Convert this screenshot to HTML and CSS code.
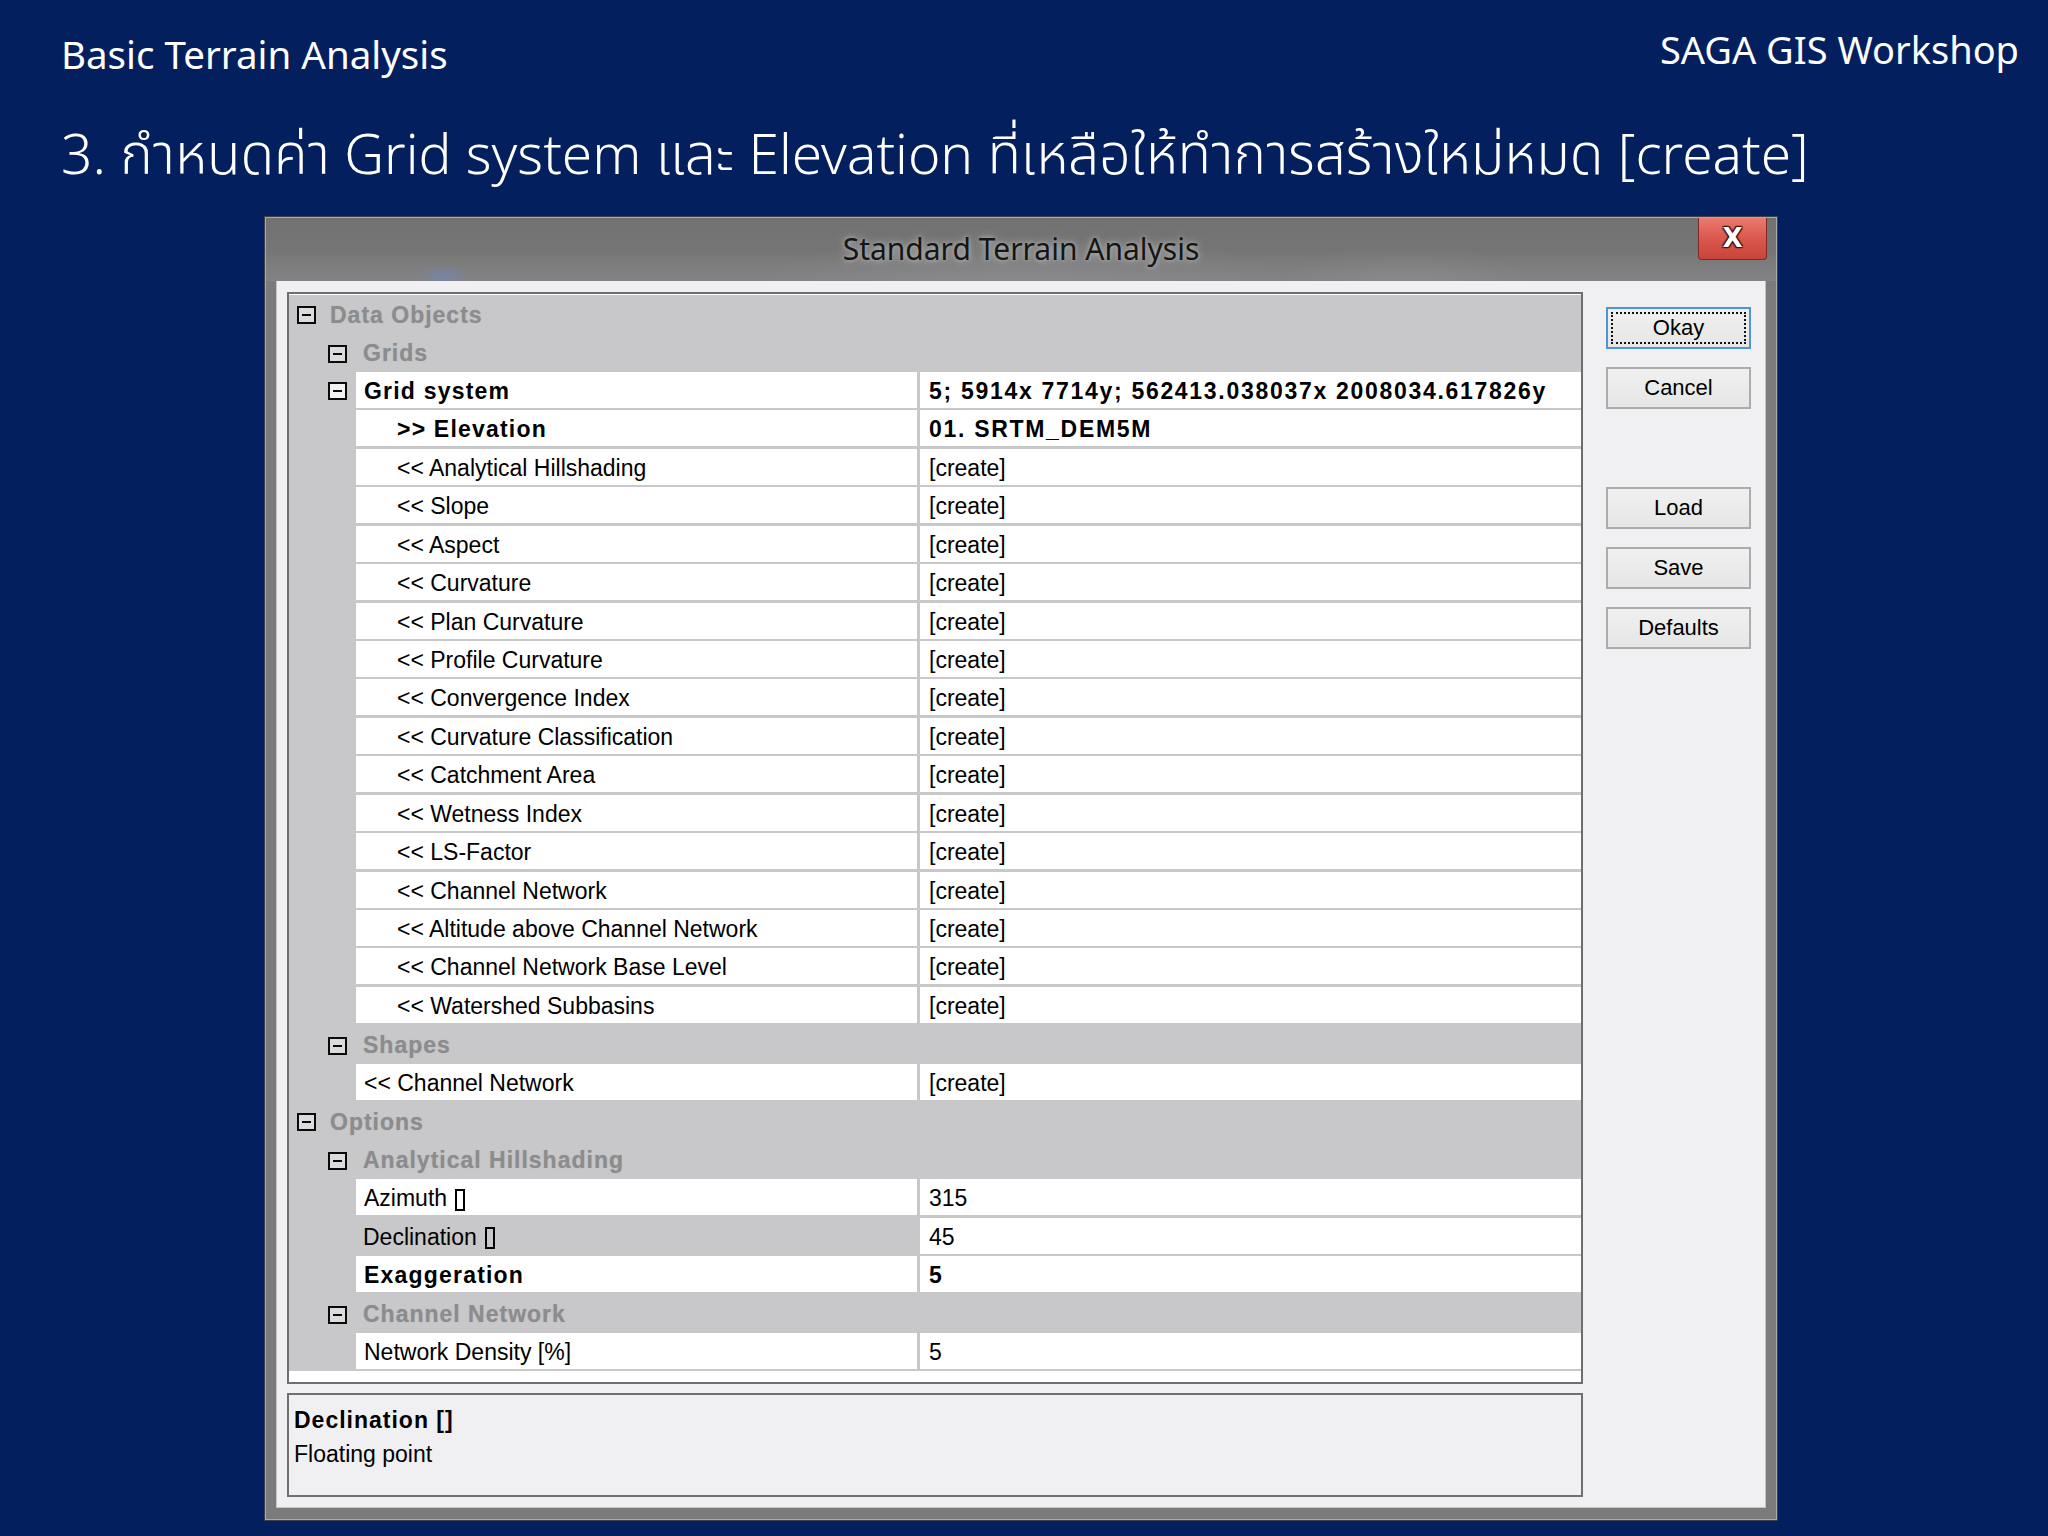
FILE: index.html
```html
<!DOCTYPE html>
<html lang="th">
<head>
<meta charset="utf-8">
<title>Standard Terrain Analysis</title>
<link rel="stylesheet" href="styles.css">
</head>
<body>
<div class="slide">
  <header class="top">
    <div class="kicker">Basic Terrain Analysis</div>
    <div class="brand">SAGA GIS Workshop</div>
  </header>
  <h1 class="title">3. กำหนดค่า Grid system และ Elevation ที่เหลือให้ทำการสร้างใหม่หมด [create]</h1>

  <div class="dialog">
    <div class="titlebar">
      <span class="wintitle">Standard Terrain Analysis</span>
      <div class="close">X</div>
    </div>
    <div class="client">
      <div class="leftcol">
        <div class="grid">
          <div class="row head"><span class="box l0"></span><span class="htext">Data Objects</span></div>
          <div class="row head"><span class="box l1"></span><span class="htext t1">Grids</span></div>
          <div class="row"><div class="gutter"><span class="box l1g"></span></div><div class="name b">Grid system</div><div class="val b">5; 5914x 7714y; 562413.038037x 2008034.617826y</div></div>
          <div class="row"><div class="gutter"></div><div class="name b in">&gt;&gt; Elevation</div><div class="val b">01. SRTM_DEM5M</div></div>
          <div class="row"><div class="gutter"></div><div class="name in">&lt;&lt; Analytical Hillshading</div><div class="val">[create]</div></div>
          <div class="row"><div class="gutter"></div><div class="name in">&lt;&lt; Slope</div><div class="val">[create]</div></div>
          <div class="row"><div class="gutter"></div><div class="name in">&lt;&lt; Aspect</div><div class="val">[create]</div></div>
          <div class="row"><div class="gutter"></div><div class="name in">&lt;&lt; Curvature</div><div class="val">[create]</div></div>
          <div class="row"><div class="gutter"></div><div class="name in">&lt;&lt; Plan Curvature</div><div class="val">[create]</div></div>
          <div class="row"><div class="gutter"></div><div class="name in">&lt;&lt; Profile Curvature</div><div class="val">[create]</div></div>
          <div class="row"><div class="gutter"></div><div class="name in">&lt;&lt; Convergence Index</div><div class="val">[create]</div></div>
          <div class="row"><div class="gutter"></div><div class="name in">&lt;&lt; Curvature Classification</div><div class="val">[create]</div></div>
          <div class="row"><div class="gutter"></div><div class="name in">&lt;&lt; Catchment Area</div><div class="val">[create]</div></div>
          <div class="row"><div class="gutter"></div><div class="name in">&lt;&lt; Wetness Index</div><div class="val">[create]</div></div>
          <div class="row"><div class="gutter"></div><div class="name in">&lt;&lt; LS-Factor</div><div class="val">[create]</div></div>
          <div class="row"><div class="gutter"></div><div class="name in">&lt;&lt; Channel Network</div><div class="val">[create]</div></div>
          <div class="row"><div class="gutter"></div><div class="name in">&lt;&lt; Altitude above Channel Network</div><div class="val">[create]</div></div>
          <div class="row"><div class="gutter"></div><div class="name in">&lt;&lt; Channel Network Base Level</div><div class="val">[create]</div></div>
          <div class="row"><div class="gutter"></div><div class="name in">&lt;&lt; Watershed Subbasins</div><div class="val">[create]</div></div>
          <div class="row head"><span class="box l1"></span><span class="htext t1">Shapes</span></div>
          <div class="row"><div class="gutter"></div><div class="name">&lt;&lt; Channel Network</div><div class="val">[create]</div></div>
          <div class="row head"><span class="box l0"></span><span class="htext">Options</span></div>
          <div class="row head"><span class="box l1"></span><span class="htext t1">Analytical Hillshading</span></div>
          <div class="row"><div class="gutter"></div><div class="name">Azimuth<span class="tofu"></span></div><div class="val">315</div></div>
          <div class="row"><div class="gutter"></div><div class="name sel">Declination<span class="tofu"></span></div><div class="val">45</div></div>
          <div class="row"><div class="gutter"></div><div class="name b">Exaggeration</div><div class="val b">5</div></div>
          <div class="row head"><span class="box l1"></span><span class="htext t1">Channel Network</span></div>
          <div class="row"><div class="gutter"></div><div class="name">Network Density [%]</div><div class="val">5</div></div>
        </div>
        <div class="desc">
          <div class="dtitle">Declination []</div>
          <div class="dtext">Floating point</div>
        </div>
      </div>
      <div class="buttons">
        <div class="btn default"><span class="focus">Okay</span></div>
        <div class="btn">Cancel</div>
        <div class="btn gap">Load</div>
        <div class="btn">Save</div>
        <div class="btn">Defaults</div>
      </div>
    </div>
  </div>
</div>
</body>
</html>
```
FILE: styles.css
```css
html, body {
  margin: 0;
  padding: 0;
  background: #041f5e;
}

.slide {
  width: 2048px;
  height: 1536px;
  overflow: hidden;
  background: #041f5e;
  color: #ffffff;
  font-family: "Noto Sans", "Noto Sans Thai", "Loma", "Garuda", "Tlwg Typo", sans-serif;
}

.top {
  height: 125px;
  box-sizing: border-box;
  padding: 30px 29px 0 61px;
  display: flex;
  justify-content: space-between;
  align-items: flex-start;
}

.kicker {
  margin-top: 5px;
  font-size: 38.5px;
  line-height: 1;
}

.brand {
  font-size: 38px;
  line-height: 1;
}

.title {
  margin: 0;
  height: 92px;
  padding-left: 61px;
  font-size: 55px;
  font-weight: 300;
  line-height: 1;
  white-space: nowrap;
}

/* ---------- dialog window ---------- */
.dialog {
  margin-left: 265px;
  width: 1512px;
  height: 1303px;
  box-sizing: border-box;
  border: 1px solid #a6abac;
  box-shadow: 0 0 0 1px #3b3f48;
  padding: 0 11px 12px 11px;
  background: #7b7b7c;
  display: flex;
  flex-direction: column;
}

.titlebar {
  position: relative;
  height: 63px;
  flex: none;
  display: flex;
  align-items: center;
  justify-content: center;
  margin: 0 -11px;
  background:
    radial-gradient(ellipse 26px 12px at 177px 58px, rgba(110, 135, 190, 0.55), rgba(110, 135, 190, 0) 100%),
    radial-gradient(ellipse 260px 40px at 760px 60px, rgba(150, 150, 155, 0.35), rgba(150, 150, 155, 0) 100%),
    radial-gradient(ellipse 120px 30px at 1140px 60px, rgba(150, 150, 150, 0.3), rgba(150, 150, 150, 0) 100%),
    linear-gradient(to bottom, #717172 0%, #757575 50%, #848487 100%);
}

.wintitle {
  font-family: "Noto Sans", sans-serif;
  font-size: 30px;
  color: #151515;
  text-shadow: 0 0 10px rgba(255, 255, 255, 0.45), 0 0 4px rgba(255, 255, 255, 0.35);
  margin-top: -2px;
}

.close {
  position: absolute;
  top: 0;
  right: 9px;
  width: 69px;
  height: 42px;
  box-sizing: border-box;
  border: 1px solid #7e2a24;
  border-top: none;
  border-radius: 0 0 4px 4px;
  background: linear-gradient(to bottom, #ea7a70 0%, #dc5a4f 45%, #c9443a 100%);
  color: #ffffff;
  font-family: "DejaVu Sans", sans-serif;
  font-weight: bold;
  font-size: 26px;
  line-height: 40px;
  text-align: center;
  text-shadow: 0 0 2px #3a1410, 1px 1px 1px #3a1410, -1px -1px 1px #3a1410, 1px -1px 1px #3a1410, -1px 1px 1px #3a1410;
}

.client {
  flex: 1;
  display: flex;
  background: #f0eff2;
  box-shadow: 0 0 0 1px #c4c4c6;
  padding: 11px 0 0 10px;
  font-family: "Liberation Sans", Arial, sans-serif;
  font-size: 23px;
  color: #000000;
}

.leftcol {
  width: 1296px;
  display: flex;
  flex-direction: column;
}

.grid {
  height: 1092px;
  box-sizing: border-box;
  border: 2px solid #6e6e70;
  padding-top: 1px;
  background: #ffffff;
  display: flex;
  flex-direction: column;
  overflow: hidden;
}

.row {
  height: 38.45px;
  flex: none;
  display: flex;
  align-items: flex-start;
  background: #c8c8ca;
}

.row.head {
  align-items: center;
  padding-top: 2px;
  box-sizing: border-box;
}

.gutter {
  width: 67px;
  height: 36px;
  flex: none;
  display: flex;
  align-items: center;
  padding-top: 2px;
  box-sizing: border-box;
}

.name {
  width: 561px;
  height: 36px;
  flex: none;
  background: #ffffff;
  display: flex;
  align-items: center;
  padding: 3px 0 0 8px;
  box-sizing: border-box;
  white-space: nowrap;
}

.name.in {
  padding-left: 41px;
}

.name.sel {
  background: #c8c8ca;
  padding-left: 7px;
}

.val {
  margin-left: 3px;
  flex: 1;
  height: 36px;
  box-sizing: border-box;
  background: #ffffff;
  display: flex;
  align-items: center;
  padding: 3px 0 0 9px;
  white-space: nowrap;
}

.b {
  font-weight: bold;
  letter-spacing: 1.2px;
}

.val.b {
  letter-spacing: 1.7px;
}

.tofu {
  display: inline-block;
  width: 10px;
  height: 22px;
  box-sizing: border-box;
  border: 2px solid #000000;
  margin-left: 8px;
  margin-top: 2px;
}

.box {
  width: 19px;
  height: 18px;
  box-sizing: border-box;
  border: 2px solid #0a0a0a;
  background: #dcdcdc;
  position: relative;
  flex: none;
}

.box::after {
  content: "";
  position: absolute;
  left: 3px;
  right: 3px;
  top: 6px;
  height: 2px;
  background: #0a0a0a;
}

.box.l0 {
  margin-left: 8px;
}

.box.l1 {
  margin-left: 39px;
}

.box.l1g {
  margin-left: 39px;
  background: #f2f2f2;
}

.htext {
  margin-left: 14px;
  font-weight: bold;
  letter-spacing: 1px;
  color: #8c8c8e;
  text-shadow: 0 0 1px rgba(140, 140, 142, 0.6);
  white-space: nowrap;
}

.htext.t1 {
  margin-left: 16px;
}

.desc {
  margin-top: 9px;
  height: 104px;
  box-sizing: border-box;
  border: 2px solid #707072;
  background: #f0eff2;
  padding: 8px 0 0 5px;
}

.dtitle {
  font-weight: bold;
  letter-spacing: 1px;
  line-height: 34px;
}

.dtext {
  line-height: 34px;
}

/* ---------- buttons ---------- */
.buttons {
  margin-left: 23px;
  margin-top: 15px;
  width: 145px;
  display: flex;
  flex-direction: column;
  gap: 18px;
}

.btn {
  height: 42px;
  box-sizing: border-box;
  border: 2px solid #acacac;
  background: linear-gradient(to bottom, #f0f0f0 0%, #e6e6e6 100%);
  display: flex;
  align-items: center;
  justify-content: center;
  font-size: 22px;
  color: #000000;
}

.btn.gap {
  margin-top: 60px;
}

.btn.default {
  border-color: #4d95d9;
  padding: 3px;
}

.focus {
  flex: 1;
  align-self: stretch;
  border: 2px dotted #111111;
  display: flex;
  align-items: center;
  justify-content: center;
}
```
